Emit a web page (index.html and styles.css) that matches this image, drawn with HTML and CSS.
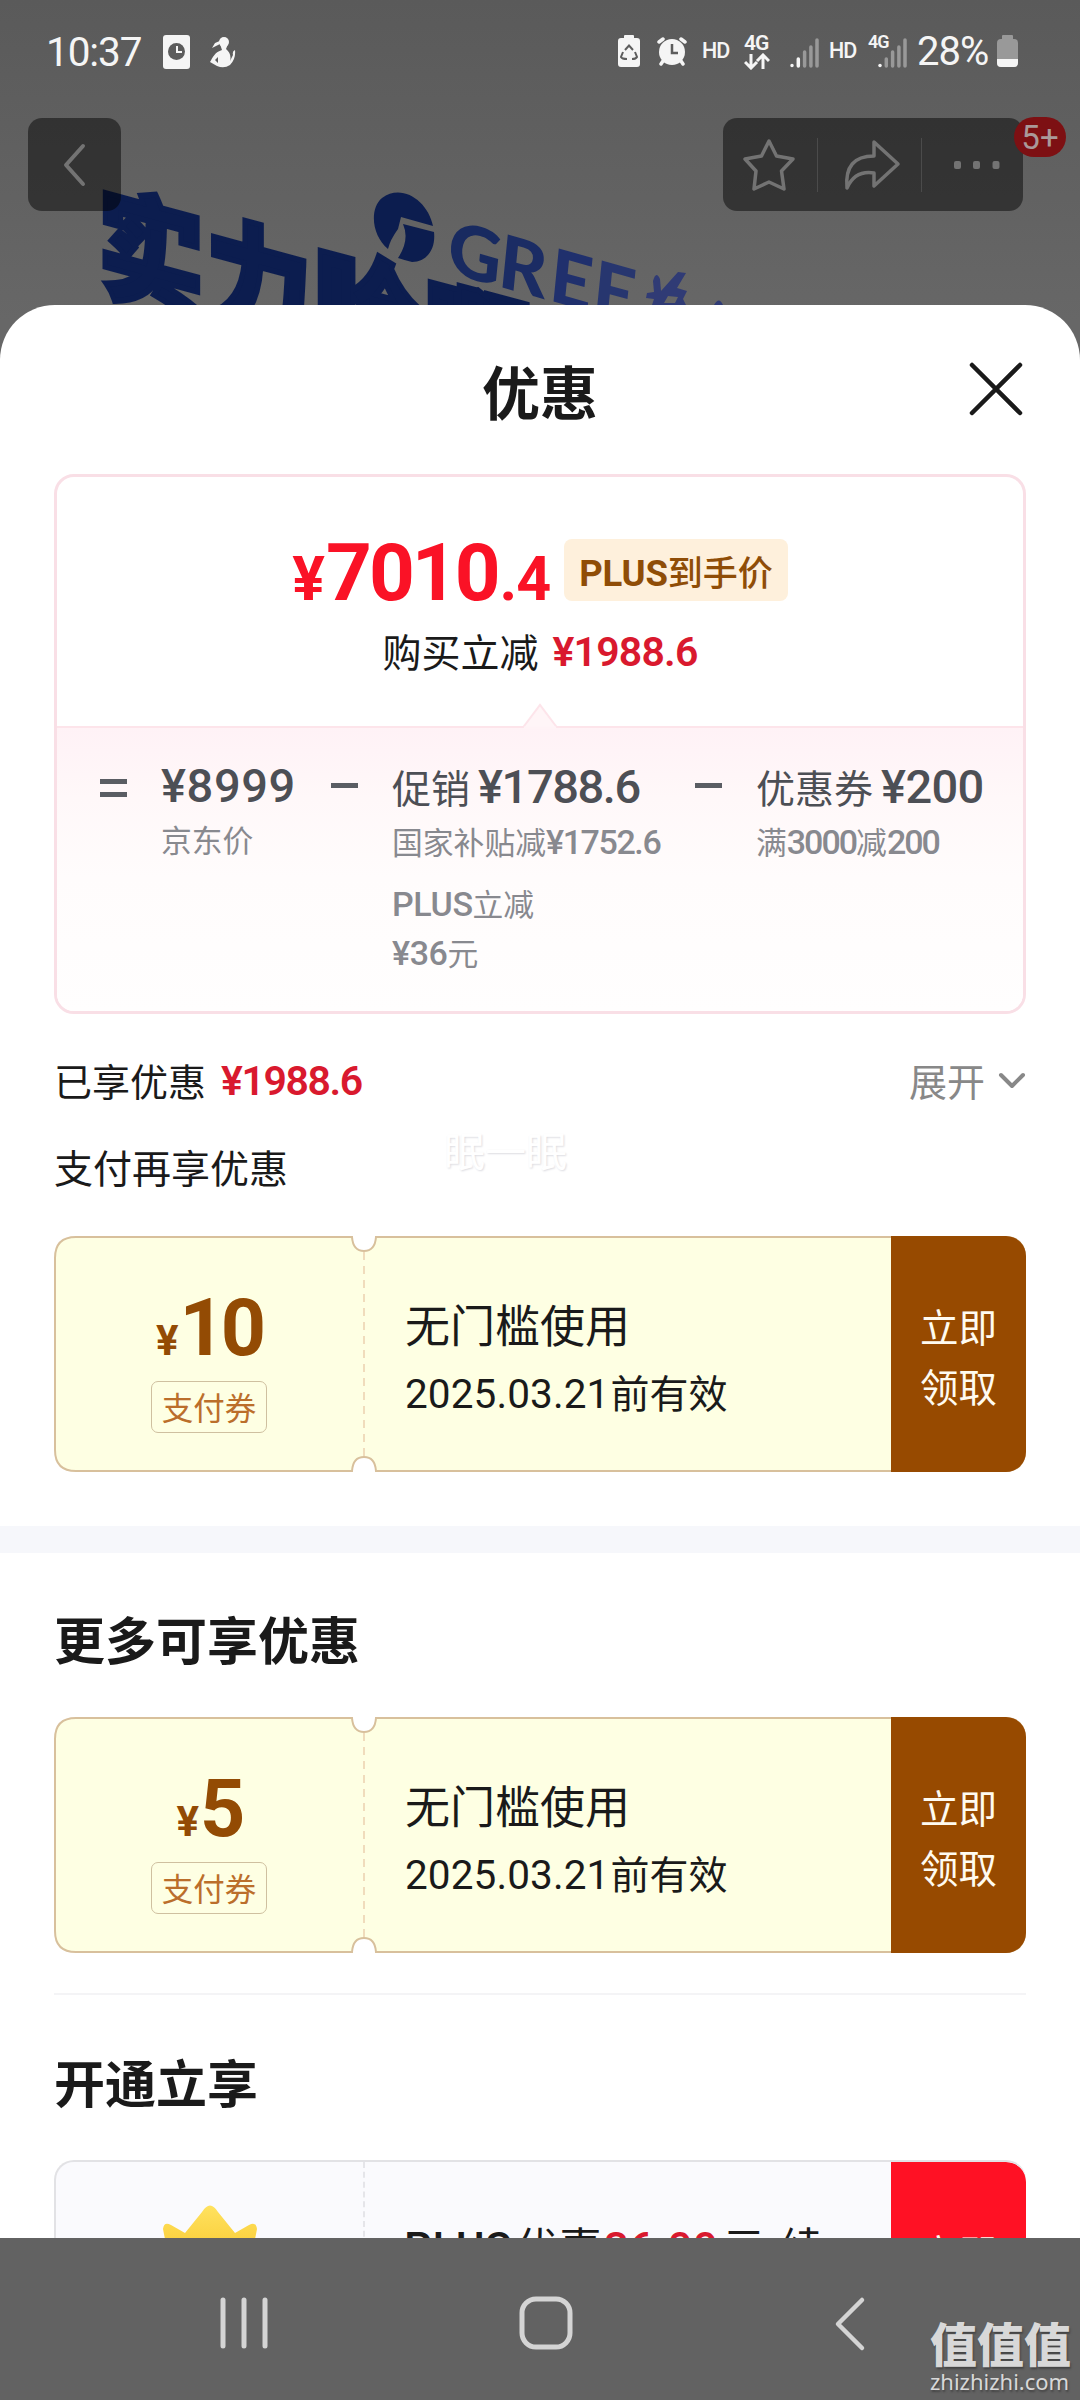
FILE: index.html
```html
<!DOCTYPE html>
<html lang="zh-CN">
<head>
<meta charset="utf-8">
<title>优惠</title>
<link rel="stylesheet" href="styles.css">
</head>
<body>
<div class="screen">
  <header class="backdrop">
    <svg class="banner" width="1080" height="305" viewBox="0 0 1080 305">
      <g fill="#0c1d4f" stroke="#0c1d4f" stroke-width="5" class="slogan">
        <text transform="matrix(1 .27 0 1.15 98 285)">实</text>
        <text transform="matrix(1 .27 0 1.15 206 314)">力</text>
        <text transform="matrix(1 .27 0 1.15 314 343)">哈</text>
        <text transform="matrix(1 .27 0 1.15 424 376)">啊</text>
      </g>
      <path fill="#0c1d4f" d="M388 249C372 236 369 209 382 198C402 183 428 201 433 226L401 217L398 229Q390 240 388 249ZM403 224L434 232C436 250 426 262 412 262Q404 260 398 258Q410 240 403 224Z"/>
      <g class="brand">
        <text fill="#182a60" transform="matrix(1 .28 -.1 1 446 272)">G</text>
        <text fill="#1b2c64" transform="matrix(1 .28 -.1 1 497 286)">R</text>
        <text fill="#20306d" transform="matrix(1 .28 -.1 1 548 300)">E</text>
        <text fill="#27366f" transform="matrix(1 .28 -.1 1 591 312)">E</text>
      </g>
      <path fill="#303b75" d="M653 281Q656 270 660 279L661 291L678 272L686 273L677 288L687 291L683 299L686 305H652L654 299L646 298L647 293L654 292ZM668 296L664 303H675L678 297ZM714 305Q719 296 723 305Z" fill-rule="evenodd"/>
    </svg>
    <div class="status">
      <div class="status-left">
        <span class="clock">10:37</span>
        <svg width="27" height="34" viewBox="0 0 27 34"><rect width="27" height="34" rx="3" fill="#f5f5f5"/><circle cx="13.5" cy="16.500" r="8.500" fill="#5c5c5c"/><path d="M14 11v6h5" fill="none" stroke="#f5f5f5" stroke-width="2"/></svg>
        <svg class="pet" width="26" height="32" viewBox="0 0 26 32"><g fill="#f5f5f5"><circle cx="14" cy="6" r="5"/><path d="M12 4L5 7L2 12L10 8L12 14C5 16 3 21 0 26L7 30Q14 33 20 29Q26 23 25 14Q22 15 23 19L20 25Q22 18 16 13L18 8ZM5 24L8 21V27Z" fill-rule="evenodd"/></g></svg>
      </div>
      <div class="status-right">
        <svg width="22" height="32" viewBox="0 0 22 32"><path d="M6 3V1q0-1 1-1h8q1 0 1 1v2h3q3 0 3 3v23q0 3-3 3H3q-3 0-3-3V6q0-3 3-3z" fill="#f5f5f5"/><path d="M7 15L11 10.500L15 15M17 17L19 22Q18 24 14 24M5 17L3 22Q4 24 9 24" fill="none" stroke="#5d5d5d" stroke-width="2"/></svg>
        <svg class="alarm" width="30" height="30" viewBox="0 0 30 30"><g stroke="#f5f5f5" stroke-width="3.500" stroke-linecap="round" fill="none"><path d="M2 6L6 3M28 6L24 3M6 25L4 28M24 25L26 28"/></g><circle cx="15" cy="16" r="13" fill="#f5f5f5"/><path d="M15 8V17H21" fill="none" stroke="#5d5d5d" stroke-width="2.500"/></svg>
        <span class="hd">HD</span>
        <span class="net"><b>4G</b><svg width="26" height="17" viewBox="0 0 26 17"><path d="M7 1V15M1 9L7 15L13 9M19 16V2M13 8L19 2L25 8" fill="none" stroke="#f5f5f5" stroke-width="3"/></svg></span>
        <svg class="sig1" width="29" height="30" viewBox="0 0 29 30"><g stroke-width="3.500" stroke-linecap="round"><path stroke="#f5f5f5" d="M2 27.500V27.600M8.300 28V21"/><path stroke="#999" d="M14.600 28V14M20.900 28V9M27 28V2"/></g></svg>
        <span class="hd hd2">HD</span>
        <span class="net2"><b>4G</b><svg width="29" height="30" viewBox="0 0 29 30"><g stroke-width="3.500" stroke-linecap="round"><path stroke="#f5f5f5" d="M2 27.500V27.600"/><path stroke="#999" d="M8.300 28V21M14.600 28V14M20.900 28V9M27 28V2"/></g></svg></span>
        <span class="percent">28%</span>
        <svg class="batt" width="21" height="32" viewBox="0 0 21 32"><path d="M5 4V1q0-1 1-1h9q1 0 1 1v3h1q4 0 4 4v20q0 4-4 4H4q-4 0-4-4V8q0-4 4-4z" fill="#999"/><path d="M0 24h21v4q0 4-4 4H4q-4 0-4-4z" fill="#f5f5f5"/></svg>
      </div>
    </div>
    <div class="tools">
      <div class="back"><svg width="24" height="44" viewBox="0 0 24 44"><path d="M20 3L3 22L20 41" fill="none" stroke="#737373" stroke-width="4" stroke-linecap="round" stroke-linejoin="round"/></svg></div>
      <div class="actions">
        <svg width="54" height="54" viewBox="0 0 54 54"><path d="M27 3L34.500 18L51 21L39.500 33L42 51L27 44L12 51L14 33L3 21L19.500 18Z" fill="none" stroke="#737373" stroke-width="3.500" stroke-linejoin="round"/></svg>
        <i class="sep"></i>
        <svg class="share" width="58" height="52" viewBox="0 0 58 52"><path d="M31 3L55 25L31 47V34Q12 31 4 49Q1 17 31 17Z" fill="none" stroke="#737373" stroke-width="3.500" stroke-linejoin="round"/></svg>
        <i class="sep"></i>
        <svg class="more" width="46" height="8" viewBox="0 0 46 8"><g fill="#737373"><rect width="7" height="8" rx="2"/><rect x="19" width="7" height="8" rx="2"/><rect x="38.500" width="7" height="8" rx="2"/></g></svg>
        <span class="badge">5+</span>
      </div>
    </div>
  </header>

  <main class="sheet">
    <div class="title-row">
      <h1>优惠</h1>
      <svg class="close" width="54" height="54" viewBox="0 0 54 54"><path d="M3 3L51 51M51 3L3 51" stroke="#1a1a1a" stroke-width="4.500" stroke-linecap="round"/></svg>
    </div>

    <section class="price-card">
      <div class="price-top">
        <div class="final">
          <span class="amount"><small>¥</small>7010<small class="dec">.4</small></span>
          <span class="plus-tag"><span class="lat">PLUS</span>到手价</span>
        </div>
        <div class="saved">购买立减<span class="num red">¥1988.6</span></div>
      </div>
      <div class="formula">
        <svg class="caret" width="36" height="26" viewBox="0 0 36 26"><path d="M1 24.500L18 2L35 24.500" fill="#fff5f7" stroke="#fde4ea" stroke-width="2"/><path d="M2 25H34" stroke="#fff3f6" stroke-width="3"/></svg>
        <span class="op eq"></span>
        <div class="term t1"><p class="main num">¥8999</p><p class="note">京东价</p></div>
        <span class="op"></span>
        <div class="term t2"><p class="main">促销<span class="num">¥1788.6</span></p><p class="note">国家补贴减<span class="num">¥1752.6</span></p><p class="note extra"><span class="lat">PLUS</span>立减<br><span class="num">¥36</span>元</p></div>
        <span class="op"></span>
        <div class="term t3"><p class="main">优惠券<span class="num">¥200</span></p><p class="note">满<span class="num">3000</span>减<span class="num">200</span></p></div>
      </div>
    </section>

    <div class="enjoyed">
      <span>已享优惠</span><span class="num red">¥1988.6</span>
      <span class="expand">展开<svg width="28" height="18" viewBox="0 0 28 18"><path d="M3 3L14 14L25 3" fill="none" stroke="#888" stroke-width="4" stroke-linecap="round" stroke-linejoin="round"/></svg></span>
    </div>
    <div class="again"><span>支付再享优惠</span><span class="ghost">眠一眠</span></div>

    <article class="coupon">
      <svg class="ticket" width="972" height="236" viewBox="0 0 972 236"><path d="M22 1H298Q299 15 310 15Q321 15 322 1H950Q971 1 971 22V214Q971 235 950 235H322Q321 221 310 221Q299 221 298 235H22Q1 235 1 214V22Q1 1 22 1Z" fill="#feffe3" stroke="#d8c09c" stroke-width="2"/><path d="M310 16V220" stroke="#f0dcbc" stroke-width="2" stroke-dasharray="8 6"/></svg>
      <div class="value"><p class="cash"><small>¥</small>10</p><span class="chip">支付券</span></div>
      <div class="info"><p class="name">无门槛使用</p><p class="date"><span>2025.03.21</span>前有效</p></div>
      <div class="get">立即<br>领取</div>
    </article>

    <div class="band"></div>
    <h2 class="h-more">更多可享优惠</h2>

    <article class="coupon">
      <svg class="ticket" width="972" height="236" viewBox="0 0 972 236"><path d="M22 1H298Q299 15 310 15Q321 15 322 1H950Q971 1 971 22V214Q971 235 950 235H322Q321 221 310 221Q299 221 298 235H22Q1 235 1 214V22Q1 1 22 1Z" fill="#feffe3" stroke="#d8c09c" stroke-width="2"/><path d="M310 16V220" stroke="#f0dcbc" stroke-width="2" stroke-dasharray="8 6"/></svg>
      <div class="value"><p class="cash"><small>¥</small>5</p><span class="chip">支付券</span></div>
      <div class="info"><p class="name">无门槛使用</p><p class="date"><span>2025.03.21</span>前有效</p></div>
      <div class="get">立即<br>领取</div>
    </article>

    <hr class="rule">
    <h2 class="h-open">开通立享</h2>

    <article class="member">
      <div class="member-value"><svg width="96" height="60" viewBox="0 0 96 60"><defs><linearGradient id="gold" x1="0" y1="0" x2="0" y2="1"><stop offset="0" stop-color="#ffe25f"/><stop offset="1" stop-color="#f8c62c"/></linearGradient></defs><path d="M1 24Q2 16 9 20L23 28L40 7Q48-6 56 7L73 28L87 20Q94 16 95 24L88 60H8Z" fill="url(#gold)"/></svg></div>
      <div class="member-info"><span class="lat">PLUS</span>优惠<span class="num red">36.00</span>元<span class="renew">续</span></div>
      <div class="get join">立即</div>
    </article>
  </main>

  <nav class="navbar">
    <svg class="recents" width="50" height="54" viewBox="0 0 50 54"><path d="M4 4V50M25 4V50M46 4V50" stroke="#d4d4d4" stroke-width="5" stroke-linecap="round"/></svg>
    <svg class="home" width="54" height="54" viewBox="0 0 54 54"><rect x="3" y="3" width="48" height="48" rx="14" fill="none" stroke="#d4d4d4" stroke-width="5"/></svg>
    <svg class="prev" width="32" height="56" viewBox="0 0 32 56"><path d="M28 4L4 28L28 52" fill="none" stroke="#d4d4d4" stroke-width="4.500" stroke-linecap="round" stroke-linejoin="round"/></svg>
    <div class="mark"><b>值值值</b><span>zhizhizhi.com</span></div>
  </nav>
</div>
</body>
</html>
```
FILE: styles.css
```css
* { box-sizing: border-box; }
body, p, h1, h2 { margin: 0; }
body { font-family: "Noto Sans CJK SC", sans-serif; color: #1a1a1a; }
svg { display: block; flex: none; }
.screen { width: 1080px; height: 2400px; display: flex; flex-direction: column; overflow: hidden; background: linear-gradient(#5a5a5a, #676767 320px); }
.num, .lat { font-family: Roboto, sans-serif; font-weight: 600; }
.red { color: #d9192e; }

/* dimmed page behind the sheet */
.backdrop { position: relative; height: 305px; flex: none; }
.banner { position: absolute; left: 0; top: 0; }
.slogan { font: 900 106px "Noto Sans CJK SC", sans-serif; }
.brand { font: 900 73px Lato, sans-serif; }
.status { position: relative; height: 118px; padding: 35px 62px 0 46px; display: flex; justify-content: space-between; font-family: Roboto, sans-serif; color: #f5f5f5; }
.status-left, .status-right { display: flex; height: 34px; }
.clock { font-size: 40.500px; line-height: 34px; width: 117px; letter-spacing: -1.100px; }
.pet { margin: 1px 0 0 20px; }
.alarm { margin: 1px 0 0 17px; }
.hd { font-size: 21.500px; font-weight: 500; line-height: 32px; width: 27px; margin-left: 15px; letter-spacing: -1px; }
.net { width: 26px; margin-left: 15px; }
.net b, .net2 b { display: block; font-size: 21px; font-weight: 600; line-height: 17px; letter-spacing: -1px; }
.net svg { margin-top: 1px; }
.sig1 { margin: 3px 0 0 20px; }
.hd2 { margin-left: 10px; }
.net2 { position: relative; width: 39px; margin-left: 12px; padding: 3px 0 0 10px; }
.net2 b { position: absolute; left: 0; top: -2px; font-size: 18px; }
.percent { font-size: 40px; line-height: 34px; width: 80px; margin-left: 10px; letter-spacing: -1px; }
.batt { margin-left: 0; }
.tools { position: relative; display: flex; justify-content: space-between; padding: 0 57px 0 28px; }
.back, .actions { height: 93px; border-radius: 14px; background: rgba(0,0,0,.47); display: flex; align-items: center; }
.back { width: 93px; padding-left: 35px; }
.actions { position: relative; width: 300px; padding-left: 19px; }
.sep { width: 1px; height: 54px; background: #4b4b4b; margin-left: 21px; }
.share { margin-left: 25px; }
.share + .sep { margin-left: 20px; }
.more { margin-left: 32px; }
.badge { position: absolute; left: 291px; top: -1px; width: 52px; height: 40px; border-radius: 20px; background: #7d1013; color: #a99; font: 33px/41px Roboto, sans-serif; text-align: center; }

/* sheet */
.sheet { flex: 1; min-height: 0; overflow: hidden; background: #fff; border-radius: 55px 55px 0 0; }
.title-row { position: relative; height: 169px; text-align: center; }
h1 { font-size: 58px; font-weight: 700; line-height: 80px; padding-top: 45px; }
.close { position: absolute; right: 57px; top: 57px; }
.price-card { margin: 0 54px; height: 540px; border: 3px solid #f9dfe6; border-radius: 20px; overflow: hidden; }
.price-top { height: 249px; display: flex; flex-direction: column; align-items: center; }
.final { display: flex; margin-top: 62px; height: 63px; gap: 14px; }
.amount { font: 700 80px/69px Roboto, sans-serif; color: #fa1226; letter-spacing: -3px; display: flex; align-items: baseline; }
.amount small { font-size: 61px; letter-spacing: 1px; }
.amount .dec { letter-spacing: -1px; margin-left: 2px; }
.plus-tag { height: 62px; padding: 0 15px; border-radius: 8px; background: #fef0dc; color: #8f4d07; font-size: 35px; line-height: 63px; font-weight: 500; }
.plus-tag .lat { font-size: 36.500px; font-weight: 700; letter-spacing: -.2px; }
.saved { margin-top: 20px; font-size: 39px; line-height: 56px; display: flex; }
.saved .num { font-size: 41px; line-height: 60px; margin-left: 14px; letter-spacing: -.8px; }
.formula { position: relative; height: 288px; border-top: 2px solid #fde4ea; background: linear-gradient(#fff2f6, #fff8f9 70px, #fffcfc 150px, #fffefe); display: flex; padding: 24px 0 0 43px; color: #4d4f55; }
.caret { position: absolute; left: 465px; top: -25px; }
.op { flex: none; width: 27px; height: 5px; background: #5a5d63; margin-top: 31px; }
.eq { height: 18px; background: none; border: solid #5a5d63; border-width: 5px 0; margin-top: 27px; }
.term { flex: none; margin-left: 34px; white-space: nowrap; }
.t1 { width: 137px; }
.t2 { width: 283px; }
.t1 + .op { margin-left: 33px; }
.t2 + .op { margin-left: 20px; }
.main { font-size: 39px; line-height: 68px; height: 68px; }
.main .num, .main.num { font-size: 47px; font-weight: 500; }
.t1 .main { letter-spacing: .6px; }
.t1 .note { margin-top: -2px; }
.main .num { margin-left: 8px; letter-spacing: -1.400px; }
.t3 .main .num { letter-spacing: -.6px; }
.note { font-size: 30.800px; line-height: 42px; color: #88898f; }
.note .num, .note .lat { font-size: 34px; font-weight: 500; letter-spacing: -1.400px; }
.t3 .note .num { letter-spacing: -2px; }
.extra { margin-top: 16px; line-height: 48px; }
.note.extra .num, .note.extra .lat { letter-spacing: -.4px; }
.enjoyed { display: flex; margin: 38px 54px 0; height: 56px; line-height: 56px; font-size: 38px; }
.enjoyed .num { font-size: 41px; line-height: 58px; margin-left: 15px; letter-spacing: -1.400px; }
.expand { margin-left: auto; color: #888; display: flex; align-items: center; gap: 13px; }
.expand svg { margin-top: 2px; }
.again { display: flex; height: 102px; margin: 26px 54px 0; font-size: 39px; line-height: 64px; }
.ghost { margin: -17px 0 0 156px; font-size: 41px; color: #fff; text-shadow: 1px 1px 2px #dddde2; height: 60px; }

/* coupons */
.coupon, .member { position: relative; display: flex; height: 236px; margin: 0 54px; }
.ticket { position: absolute; left: 0; top: 0; }
.value { position: relative; width: 310px; padding-top: 52px; display: flex; flex-direction: column; align-items: center; }
.cash { height: 80px; font: 700 79px/80px Roboto, sans-serif; color: #934b04; letter-spacing: -4px; display: flex; align-items: baseline; }
.cash small { font-size: 42px; margin-right: 5px; }
.chip { margin-top: 13px; width: 116px; height: 52px; border: 1px solid #cfc0a0; border-radius: 7px; text-align: center; color: #bb6e2b; font-size: 31.500px; line-height: 49px; }
.info { position: relative; flex: 1; padding: 55px 0 0 41px; }
.name { font-size: 45px; line-height: 66px; }
.date { font-size: 39px; line-height: 68px; }
.date span { font: 40.500px Roboto, sans-serif; margin-right: 1px; letter-spacing: .1px; }
.get { position: relative; width: 135px; background: #974a00; border-radius: 0 20px 20px 0; color: #fffbf0; font-size: 38.500px; line-height: 60px; text-align: center; padding-top: 59px; }
.band { height: 27px; margin: 54px 0 47px; background: #f6f7fb; }
h2 { margin-left: 54px; font-size: 51px; font-weight: 700; line-height: 76px; }
.h-more { margin-bottom: 41px; }
.rule { border: 0; height: 2px; background: #f4f4f6; margin: 40px 54px 48px; }
.h-open { margin-bottom: 41px; }
.member { border: 2px solid #e2e2e5; border-right: 0; border-radius: 20px; background: #fafafd; overflow: hidden; }
.member-value { width: 309px; border-right: 2px dashed #e5e5e9; padding: 43px 0 0 106px; }
.member-info { flex: 1; padding: 46px 0 0 39px; font-size: 43px; line-height: 74px; white-space: nowrap; }
.member-info .lat, .member-info .num { font-weight: 500; font-size: 44px; letter-spacing: .4px; margin-right: 4px; }
.member-info .num { margin-left: 2px; }
.renew { margin-left: 15px; }
.join { background: #ff1124; }

/* system navigation */
.navbar { position: relative; height: 162px; flex: none; background: #626262; display: flex; align-items: flex-start; padding-top: 58px; }
.recents { margin-left: 219px; }
.home { margin-left: 250px; }
.prev { margin: 0 0 0 261px; }
.mark { margin: 19px 0 0 64px; width: 142px; color: #d8d8d8; text-shadow: 1px 2px 2px #444; }
.mark b { display: block; font-size: 47px; line-height: 54px; font-weight: 900; }
.mark span { display: block; font: 22px/24px "Noto Sans", sans-serif; margin-top: 0; }
```
